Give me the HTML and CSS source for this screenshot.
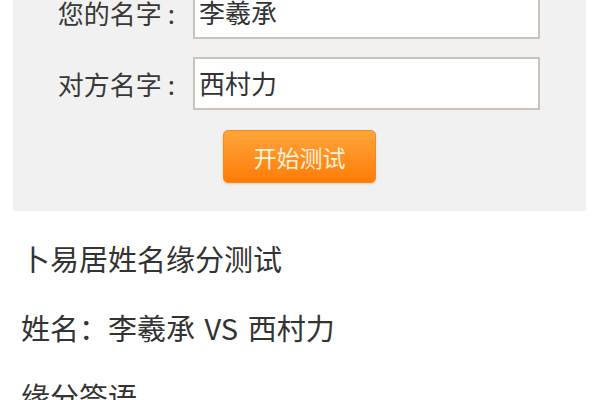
FILE: index.html
```html
<!DOCTYPE html>
<html lang="zh-CN">
<head>
<meta charset="utf-8">
<title>姓名缘分测试</title>
<link rel="stylesheet" href="styles.css">
</head>
<body>
<div class="panel">
  <div class="row">
    <span class="label">您的名字<span class="colon">:</span></span>
    <div class="input">李羲承</div>
  </div>
  <div class="row">
    <span class="label">对方名字<span class="colon">:</span></span>
    <div class="input">西村力</div>
  </div>
  <div class="actions">
    <button class="btn">开始测试</button>
  </div>
</div>
<div class="result">
  <p class="line">卜易居姓名缘分测试</p>
  <p class="line">姓名：李羲承 VS 西村力</p>
  <p class="line">缘分签语</p>
</div>
</body>
</html>
```

FILE: styles.css
```css
html, body {
  margin: 0;
  padding: 0;
  background: #ffffff;
}
body {
  font-family: "Noto Sans CJK SC", "Noto Sans", sans-serif;
  color: #333333;
  overflow: hidden;
}
.panel {
  margin: -34px 0 0 13px;
  width: 573px;
  background: #f1f1f1;
  padding: 20px 0 28px 0;
  display: flex;
  flex-direction: column;
  gap: 18px;
}
.row {
  display: flex;
  align-items: center;
}
.label {
  width: 162px;
  padding-right: 18px;
  text-align: right;
  font-size: 26px;
  color: #383838;
}
.colon {
  margin-left: 6px;
}
.input {
  box-sizing: border-box;
  width: 347px;
  height: 53px;
  border: 2px solid #cdc3bb;
  background: #ffffff;
  padding-left: 4px;
  font-size: 26px;
  line-height: 47px;
  color: #333333;
}
.actions {
  display: flex;
  padding-left: 210px;
  margin-top: 2px;
}
.btn {
  box-sizing: border-box;
  width: 153px;
  height: 53px;
  border: 1px solid #f38a1c;
  border-radius: 5px;
  background: linear-gradient(#ffa53a, #ff7c08);
  color: #fff1d8;
  font-family: "Noto Sans CJK SC", sans-serif;
  font-size: 23px;
  padding: 0;
  box-shadow: 0 1px 2px rgba(200, 100, 0, 0.3);
}
.result {
  padding: 13px 0 0 21px;
}
.line {
  margin: 0;
  font-size: 29px;
  line-height: 69px;
  color: #333333;
  white-space: nowrap;
  word-spacing: 3px;
}
```
